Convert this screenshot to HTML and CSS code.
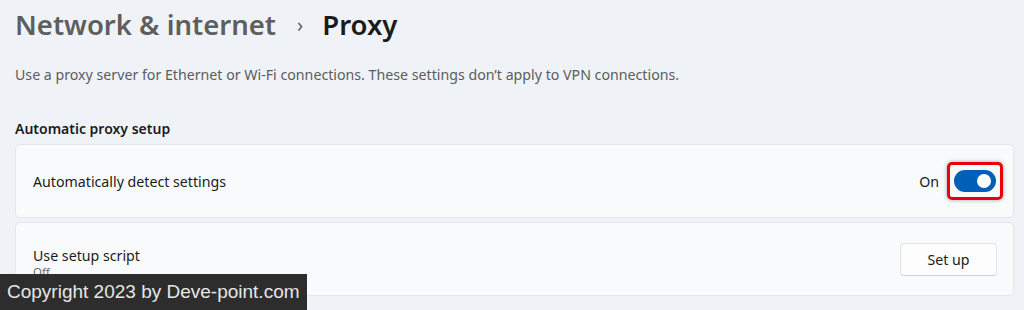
FILE: index.html
```html
<!DOCTYPE html>
<html lang="en">

<head>
    <meta charset="UTF-8">
    <title>Proxy</title>
    <link rel="stylesheet" href="styles.css">
</head>

<body>
    <div class="page">
        <!-- 标题 -->
        <div class="breadcrumb">
            <span class="crumb-parent">Network &amp; internet</span>
            <span class="crumb-sep">&#x203A;</span>
            <span class="crumb-current">Proxy</span>
        </div>

        <p class="description">Use a proxy server for Ethernet or Wi-Fi connections. These settings don’t apply to VPN connections.</p>

        <div class="section-title">Automatic proxy setup</div>

        <div class="card">
            <div class="card-label">Automatically detect settings</div>
            <div class="card-action">
                <span class="state-text">On</span>
                <div class="highlight">
                    <div class="toggle">
                        <div class="toggle-knob"></div>
                    </div>
                </div>
            </div>
        </div>

        <div class="card card-script">
            <div class="card-text">
                <div class="card-label">Use setup script</div>
                <div class="card-sub">Off</div>
            </div>
            <button class="btn">Set up</button>
        </div>
    </div>

    <div class="copyright">Copyright 2023 by Deve-point.com</div>
</body>

</html>
```

FILE: styles.css
```css
/* 全局样式 */
body {
    margin: 0;
    padding: 0;
    background-color: #eff3f8;
    font-family: "Noto Sans", "Open Sans", sans-serif;
    color: #1a1a1a;
    overflow: hidden;
}

.page {
    padding: 6px 10px 0 15px;
}

/* 标题 */
.breadcrumb {
    display: flex;
    align-items: baseline;
    height: 46px;
    font-size: 27.5px;
    font-weight: 600;
}

.crumb-parent {
    color: #5e5e5e;
}

.crumb-sep {
    margin: 0 19px 0 21px;
    font-size: 20px;
    font-weight: 400;
    color: #5e5e5e;
    position: relative;
    top: -3px;
}

.crumb-current {
    color: #1b1b1b;
}

.description {
    margin: 13px 0 0 0;
    font-size: 14.2px;
    color: #5c5c5c;
}

.section-title {
    margin-top: 35px;
    font-size: 14px;
    font-weight: 600;
    color: #1b1b1b;
}

/* 卡片 */
.card {
    display: flex;
    align-items: center;
    justify-content: space-between;
    height: 72px;
    margin-top: 6px;
    padding: 0 10px 0 17px;
    background: #f9fafc;
    border: 1px solid #e3e6ea;
    border-radius: 5px;
}

.card-script {
    margin-top: 4px;
    padding-right: 16px;
}

.card-label {
    font-size: 14.2px;
    color: #1b1b1b;
}

.card-text {
    margin-top: 6px;
}

.card-sub {
    font-size: 11.5px;
    color: #6b6b6b;
    line-height: 14px;
}

.card-action {
    display: flex;
    align-items: center;
}

.state-text {
    font-size: 14.2px;
    margin-right: 8px;
    color: #1b1b1b;
}

.highlight {
    padding: 5px 4px;
    border: 3px solid #e8000b;
    border-radius: 5px;
    box-shadow: 0 0 4px rgba(0, 0, 0, 0.35);
}

.toggle {
    position: relative;
    width: 42px;
    height: 22px;
    border-radius: 11px;
    background: #005fb8;
}

.toggle-knob {
    position: absolute;
    top: 4px;
    right: 5px;
    width: 14px;
    height: 14px;
    border-radius: 50%;
    background: #fff;
}

.btn {
    width: 97px;
    height: 33px;
    font-family: "Noto Sans", "Open Sans", sans-serif;
    font-size: 14.2px;
    color: #1b1b1b;
    background: #fdfdfd;
    border: 1px solid #e2e2e2;
    border-bottom-color: #d0d0d0;
    border-radius: 4px;
}

/* 水印 */
.copyright {
    position: absolute;
    left: 0;
    top: 274px;
    width: 300px;
    height: 36px;
    padding-left: 7px;
    background: #2d2d2d;
    color: #e6e6e6;
    font-family: "Liberation Sans", Arial, sans-serif;
    font-size: 19px;
    line-height: 36px;
}
```
